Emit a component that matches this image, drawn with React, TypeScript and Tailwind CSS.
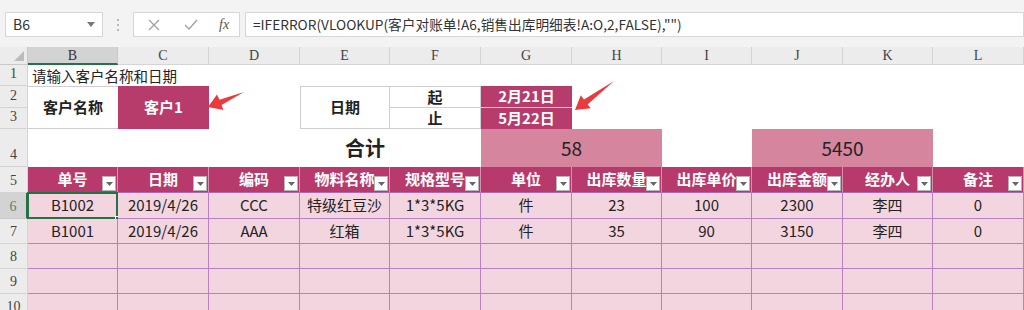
import React from "react";

const cols = ["B", "C", "D", "E", "F", "G", "H", "I", "J", "K", "L"];
const headers = ["单号", "日期", "编码", "物料名称", "规格型号", "单位", "出库数量", "出库单价", "出库金额", "经办人", "备注"];
const rows = [
  ["B1002", "2019/4/26", "CCC", "特级红豆沙", "1*3*5KG", "件", "23", "100", "2300", "李四", "0"],
  ["B1001", "2019/4/26", "AAA", "红箱", "1*3*5KG", "件", "35", "90", "3150", "李四", "0"],
  ["", "", "", "", "", "", "", "", "", "", ""],
  ["", "", "", "", "", "", "", "", "", "", ""],
  ["", "", "", "", "", "", "", "", "", "", ""],
];

const FilterBtn = () => (
  <span className="absolute right-[1px] bottom-[1px] w-[14px] h-[15px] bg-white border border-[#b5b5b5] flex items-center justify-center">
    <svg width="7" height="4" viewBox="0 0 7 4">
      <path d="M0 0h7L3.5 4z" fill="#666" />
    </svg>
  </span>
);

const App = () => {
  return (
    <div
      className="relative w-[1024px] h-[310px] overflow-hidden bg-white text-[#222]"
      style={{ fontFamily: '"Noto Sans CJK SC", "Noto Sans", sans-serif' }}
    >
      {/* formula bar */}
      <div className="h-[47px] bg-[#f3f3f3] flex items-start pt-[12px] gap-0">
        <div className="ml-[5px] w-[98px] h-[25px] bg-white border border-[#d6d6d6] flex items-center justify-between px-[7px]">
          <span className="text-[14px] text-[#333]">B6</span>
          <svg width="8" height="5" viewBox="0 0 8 5">
            <path d="M0 0h8L4 5z" fill="#777" />
          </svg>
        </div>
        <div className="w-[30px] h-[25px] flex flex-col items-center justify-center gap-[3px]">
          <span className="w-[2px] h-[2px] bg-[#b8b8b8]" />
          <span className="w-[2px] h-[2px] bg-[#b8b8b8]" />
          <span className="w-[2px] h-[2px] bg-[#b8b8b8]" />
        </div>
        <div className="w-[107px] h-[25px] bg-white border border-[#d6d6d6] flex items-center">
          <svg className="ml-[14px]" width="12" height="12" viewBox="0 0 12 12">
            <path d="M1 1l10 10M11 1L1 11" stroke="#a0a0a0" strokeWidth="1.3" />
          </svg>
          <svg className="ml-[24px]" width="14" height="11" viewBox="0 0 14 11">
            <path d="M1 6l4 4 8-9" stroke="#a0a0a0" strokeWidth="1.3" fill="none" />
          </svg>
          <span
            className="ml-[21px] text-[14px] italic text-[#555]"
            style={{ fontFamily: '"Liberation Serif", serif' }}
          >
            fx
          </span>
        </div>
        <div className="ml-[5px] flex-1 h-[25px] bg-white border border-[#d6d6d6] flex items-center pl-[7px]">
          <span className="text-[13.7px] text-[#333]">
            =IFERROR(VLOOKUP(客户对账单!A6,销售出库明细表!A:O,2,FALSE),"")
          </span>
        </div>
      </div>

      {/* sheet grid */}
      <div className="grid grid-cols-[28px_90px_91px_91px_90px_91px_91px_90px_90px_91px_90px_91px] grid-rows-[18px_21px_22px_21px_38px_26px_26px_25px_25px_25px_25px]">
        {/* column headers */}
        <div className="relative bg-[#ececec] border-r border-b border-[#c8c8c8]">
          <svg className="absolute right-[3px] bottom-[3px]" width="10" height="10" viewBox="0 0 10 10">
            <path d="M10 0v10H0z" fill="#bcbcbc" />
          </svg>
        </div>
        {cols.map((c, i) => (
          <div
            key={c}
            className={
              i === 0
                ? "bg-[#d3d3d3] border-b-2 border-b-[#217346] border-r border-r-[#c8c8c8] flex items-center justify-center text-[14px] text-[#333]"
                : "bg-[#ececec] border-b border-r border-[#d4d4d4] flex items-center justify-center text-[14px] text-[#444]"
            }
            style={{ fontFamily: '"Liberation Serif", serif' }}
          >
            {c}
          </div>
        ))}

        {/* row numbers */}
        {Array.from({ length: 10 }, (_, i) => (
          <div
            key={i}
            className={
              i === 5
                ? "col-start-1 bg-[#d3d3d3] border-r-2 border-r-[#217346] border-b border-b-[#c8c8c8] flex items-end justify-center pb-[1px] text-[14px] text-[#5b7f6a]"
                : "col-start-1 bg-[#ececec] border-r border-b border-[#d4d4d4] flex items-end justify-center pb-[1px] text-[14px] text-[#444]"
            }
            style={{ fontFamily: '"Liberation Serif", serif', gridRowStart: i + 2 }}
          >
            {i + 1}
          </div>
        ))}

        {/* row 1 */}
        <div className="col-start-2 col-span-4 row-start-2 flex items-center pl-[4px] text-[14.5px] whitespace-nowrap">
          请输入客户名称和日期
        </div>

        {/* rows 2-3 */}
        <div className="col-start-2 row-start-3 row-span-2 border-y border-[#cfcfcf] flex items-center justify-center text-[15px] font-bold">
          客户名称
        </div>
        <div className="col-start-3 row-start-3 row-span-2 bg-[#b83c6b] flex items-center justify-center text-[15px] font-bold text-white">
          客户1
        </div>
        <div className="col-start-5 row-start-3 row-span-2 border border-[#cfcfcf] flex items-center justify-center text-[15px] font-bold">
          日期
        </div>
        <div className="col-start-6 row-start-3 border-t border-r border-b border-[#cfcfcf] flex items-center justify-center text-[15px] font-bold">
          起
        </div>
        <div className="col-start-6 row-start-4 border-r border-b border-[#cfcfcf] flex items-center justify-center text-[15px] font-bold">
          止
        </div>
        <div className="col-start-7 row-start-3 bg-[#b83c6b] border-b border-[#e9c6d3] flex items-center justify-center text-[15px] font-bold text-white">
          2月21日
        </div>
        <div className="col-start-7 row-start-4 bg-[#b83c6b] flex items-center justify-center text-[15px] font-bold text-white">
          5月22日
        </div>

        {/* row 4 */}
        <div className="col-start-4 col-span-3 row-start-5 flex items-center justify-center pl-[40px] text-[20px] font-bold">
          合计
        </div>
        <div className="col-start-7 col-span-2 row-start-5 bg-[#d6859f] flex items-center justify-center text-[19px]">
          58
        </div>
        <div className="col-start-10 col-span-2 row-start-5 bg-[#d6859f] flex items-center justify-center text-[19px]">
          5450
        </div>

        {/* table header */}
        {headers.map((h, i) => (
          <div
            key={h}
            className="relative row-start-6 bg-[#b8396b] border-r border-r-[#d98eab] border-b border-b-[#a96ab8] flex items-center justify-center text-[15px] font-bold text-white whitespace-nowrap"
            style={{ gridColumnStart: i + 2 }}
          >
            {h}
            <FilterBtn />
          </div>
        ))}

        {/* table body */}
        {rows.map((r, ri) =>
          r.map((v, ci) => (
            <div
              key={ri + "-" + ci}
              className="relative bg-[#f3d5e0] border-r border-b border-[#b67fc6] flex items-center justify-center text-[15px] text-[#222] whitespace-nowrap"
              style={{ gridColumnStart: ci + 2, gridRowStart: ri + 7 }}
            >
              {v}
              {ri === 0 && ci === 0 && (
                <>
                  <span className="absolute -left-[1px] -top-[1px] -right-[1px] -bottom-[1px] border-2 border-[#217346]" />
                  <span className="absolute -right-[4px] -bottom-[4px] w-[6px] h-[6px] bg-[#217346] border border-white" />
                </>
              )}
            </div>
          ))
        )}
      </div>

      {/* red arrows */}
      <svg className="absolute left-0 top-0 pointer-events-none" width="1024" height="310" viewBox="0 0 1024 310">
        <polygon points="208,107 217,94.5 219.5,99.8 244,92 221.5,105 223.5,110" fill="#ea3a3e" />
        <polygon points="575,110 580.8,95.2 584,99.6 614,81 587.6,104.6 590.8,108.2" fill="#ea3a3e" />
      </svg>
    </div>
  );
};

export default App;
